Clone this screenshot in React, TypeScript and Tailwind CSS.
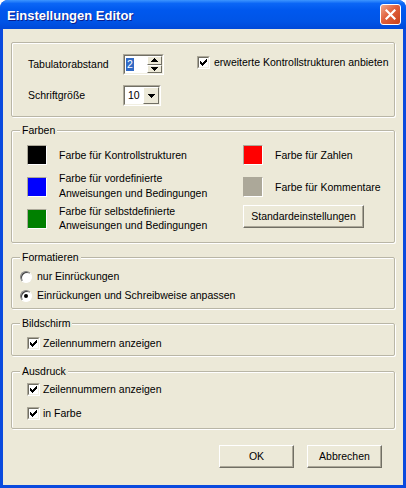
import type { ReactNode } from 'react';

const FONT = "font-['Liberation_Sans',Arial,sans-serif]";

function CheckMark() {
  return (
    <svg width="7" height="7" viewBox="0 0 7 7" shapeRendering="crispEdges">
      <path d="M0 2h1v1h1v1h1v-1h1v-1h1v-1h1v-1h1v3h-1v1h-1v1h-1v1h-1v1h-1v-1h-1v-1h-1v-1h-1z" fill="#000" />
    </svg>
  );
}

function CheckBox({ checked }: { checked?: boolean }) {
  return (
    <span className="flex w-[13px] h-[13px] shrink-0 border border-t-[#aca899] border-l-[#aca899] border-b-white border-r-white">
      <span className="flex flex-1 items-center justify-center bg-white border border-t-[#716f64] border-l-[#716f64] border-b-[#f1efe2] border-r-[#f1efe2]">
        {checked && <CheckMark />}
      </span>
    </span>
  );
}

function Radio({ checked }: { checked?: boolean }) {
  return (
    <span className="flex w-[12px] h-[12px] shrink-0 items-center justify-center rounded-full bg-white border border-t-[#808080] border-l-[#808080] border-b-white border-r-white shadow-[inset_1px_1px_0_#404040]">
      {checked && <span className="w-[4px] h-[4px] rounded-full bg-black" />}
    </span>
  );
}

function Arrow({ up }: { up?: boolean }) {
  return (
    <svg width="7" height="4" viewBox="0 0 7 4" shapeRendering="crispEdges">
      <path d={up ? 'M3 0h1v1h1v1h1v1h1v1h-7v-1h1v-1h1v-1h1z' : 'M0 0h7v1h-1v1h-1v1h-1v1h-1v-1h-1v-1h-1v-1h-1z'} fill="#000" />
    </svg>
  );
}

function Swatch({ color }: { color: string }) {
  return (
    <span className={`w-[20px] h-[20px] shrink-0 border border-t-[#aca899] border-l-[#aca899] border-b-white border-r-white ${color}`} />
  );
}

function Button({ children, className = '' }: { children: ReactNode; className?: string }) {
  return (
    <button className={`h-[23px] flex items-center justify-center bg-[#ece9d8] border border-t-white border-l-white border-b-[#716f64] border-r-[#716f64] shadow-[inset_-1px_-1px_0_#aca899] text-black leading-[13px] ${className}`}>
      {children}
    </button>
  );
}

function Group({ title, className = '', children }: { title: string; className?: string; children: ReactNode }) {
  return (
    <fieldset className={`border border-[#b9b6a6] rounded-[2px] shadow-[1px_1px_0_#fff,inset_1px_1px_0_#fff] ${className}`}>
      <legend className="ml-[8px] px-[2px] leading-[13px] bg-[#ece9d8]">{title}</legend>
      {children}
    </fieldset>
  );
}

export default function App() {
  return (
    <div className={`w-[406px] h-[488px] flex flex-col bg-[#0a4ade] rounded-t-[8px] overflow-hidden text-[10.5px] text-black ${FONT}`}>
      {/* title bar */}
      <div className="h-[29px] shrink-0 flex items-center justify-between pl-[7px] pr-[5px] bg-[linear-gradient(to_bottom,#3d95ff_0%,#0b66f6_12%,#0058ee_35%,#0054e6_75%,#0049d8_100%)]">
        <span className="text-[13px] font-bold text-white leading-[16px] pt-[2px] [text-shadow:1px_1px_0_#0a1e8c]">Einstellungen Editor</span>
        <button className="w-[21px] h-[21px] flex items-center justify-center rounded-[3px] border border-white bg-[linear-gradient(135deg,#f0a88c_0%,#e0603c_45%,#c8401a_100%)]">
          <svg width="11" height="11" viewBox="0 0 11 11">
            <path d="M1.5 1.5L9.5 9.5M9.5 1.5L1.5 9.5" stroke="#fff" strokeWidth="2.2" strokeLinecap="square" />
          </svg>
        </button>
      </div>

      {/* client area */}
      <div className="flex-1 flex px-[3px] pb-[3px]">
        <div className="flex-1 flex flex-col bg-[#ece9d8] px-[8px] pt-[13px]">
          {/* top options */}
          <div className="border border-[#b9b6a6] rounded-[2px] shadow-[1px_1px_0_#fff,inset_1px_1px_0_#fff] pl-[16px] pt-[11px] pb-[10px] flex flex-col gap-[10px]">
            <div className="flex items-center h-[21px]">
              <span className="w-[95px]">Tabulatorabstand</span>
              <div className="w-[41px] h-[21px] flex bg-white border border-t-[#aca899] border-l-[#aca899] border-b-white border-r-white">
                <div className="flex-1 flex border border-t-[#716f64] border-l-[#716f64] border-b-[#f1efe2] border-r-[#f1efe2]">
                  <div className="flex-1 flex items-center pl-[1px]">
                    <span className="bg-[#316ac5] text-white leading-[13px] px-[1px]">2</span>
                  </div>
                  <div className="w-[15px] flex flex-col">
                    <span className="flex-1 flex items-center justify-center bg-[#ece9d8] border border-t-white border-l-white border-b-[#716f64] border-r-[#716f64]">
                      <Arrow up />
                    </span>
                    <span className="flex-1 flex items-center justify-center bg-[#ece9d8] border border-t-white border-l-white border-b-[#716f64] border-r-[#716f64]">
                      <Arrow />
                    </span>
                  </div>
                </div>
              </div>
              <div className="flex items-center gap-[4px] ml-[33px] -mt-[4px]">
                <CheckBox checked />
                <span className="leading-[13px] whitespace-nowrap">erweiterte Kontrollstrukturen anbieten</span>
              </div>
            </div>
            <div className="flex items-center h-[21px]">
              <span className="w-[95px]">Schriftgröße</span>
              <div className="w-[38px] h-[21px] flex bg-white border border-t-[#aca899] border-l-[#aca899] border-b-white border-r-white">
                <div className="flex-1 flex border border-t-[#716f64] border-l-[#716f64] border-b-[#f1efe2] border-r-[#f1efe2]">
                  <div className="flex-1 flex items-center pl-[3px]">10</div>
                  <span className="w-[16px] flex items-center justify-center bg-[#ece9d8] border border-t-white border-l-white border-b-[#716f64] border-r-[#716f64]">
                    <Arrow />
                  </span>
                </div>
              </div>
            </div>
          </div>

          {/* Farben */}
          <Group title="Farben" className="mt-[7px]">
            <div className="grid grid-cols-[216px_1fr] gap-y-[12px] pl-[15px] pt-[8px] pb-[13px] leading-[13px]">
              <div className="flex items-center gap-[12px] h-[20px]">
                <Swatch color="bg-black" />
                <span>Farbe für Kontrollstrukturen</span>
              </div>
              <div className="flex items-center gap-[12px] h-[20px]">
                <Swatch color="bg-[#ff0000]" />
                <span>Farbe für Zahlen</span>
              </div>
              <div className="flex items-center gap-[12px] h-[20px]">
                <Swatch color="bg-[#0000ff]" />
                <span className="-mt-[2px] leading-[15px]">Farbe für vordefinierte<br />Anweisungen und Bedingungen</span>
              </div>
              <div className="flex items-center gap-[12px] h-[20px]">
                <Swatch color="bg-[#aca899]" />
                <span>Farbe für Kommentare</span>
              </div>
              <div className="flex items-center gap-[12px] h-[20px]">
                <Swatch color="bg-[#008000]" />
                <span className="-mt-[2px] leading-[14px]">Farbe für selbstdefinierte<br />Anweisungen und Bedingungen</span>
              </div>
              <div className="flex items-start h-[20px]">
                <Button className="w-[121px] -mt-[4px]">Standardeinstellungen</Button>
              </div>
            </div>
          </Group>

          {/* Formatieren */}
          <Group title="Formatieren" className="mt-[8px]">
            <div className="flex flex-col gap-[6px] pl-[8px] pt-[6px] pb-[6px] leading-[13px]">
              <label className="flex items-center gap-[5px] h-[13px]">
                <Radio />
                <span>nur Einrückungen</span>
              </label>
              <label className="flex items-center gap-[5px] h-[13px]">
                <Radio checked />
                <span>Einrückungen und Schreibweise anpassen</span>
              </label>
            </div>
          </Group>

          {/* Bildschirm */}
          <Group title="Bildschirm" className="mt-[8px]">
            <div className="flex flex-col pl-[15px] pt-[7px] pb-[5px] leading-[13px]">
              <label className="flex items-center gap-[3px] h-[13px]">
                <CheckBox checked />
                <span>Zeilennummern anzeigen</span>
              </label>
            </div>
          </Group>

          {/* Ausdruck */}
          <Group title="Ausdruck" className="mt-[9px]">
            <div className="flex flex-col gap-[11px] pl-[15px] pt-[5px] pb-[8px] leading-[13px]">
              <label className="flex items-center gap-[3px] h-[13px]">
                <CheckBox checked />
                <span>Zeilennummern anzeigen</span>
              </label>
              <label className="flex items-center gap-[3px] h-[13px]">
                <CheckBox checked />
                <span>in Farbe</span>
              </label>
            </div>
          </Group>

          {/* dialog buttons */}
          <div className="flex justify-end gap-[13px] pr-[13px] mt-[16px]">
            <Button className="w-[75px]">OK</Button>
            <Button className="w-[75px]">Abbrechen</Button>
          </div>
        </div>
      </div>
    </div>
  );
}
